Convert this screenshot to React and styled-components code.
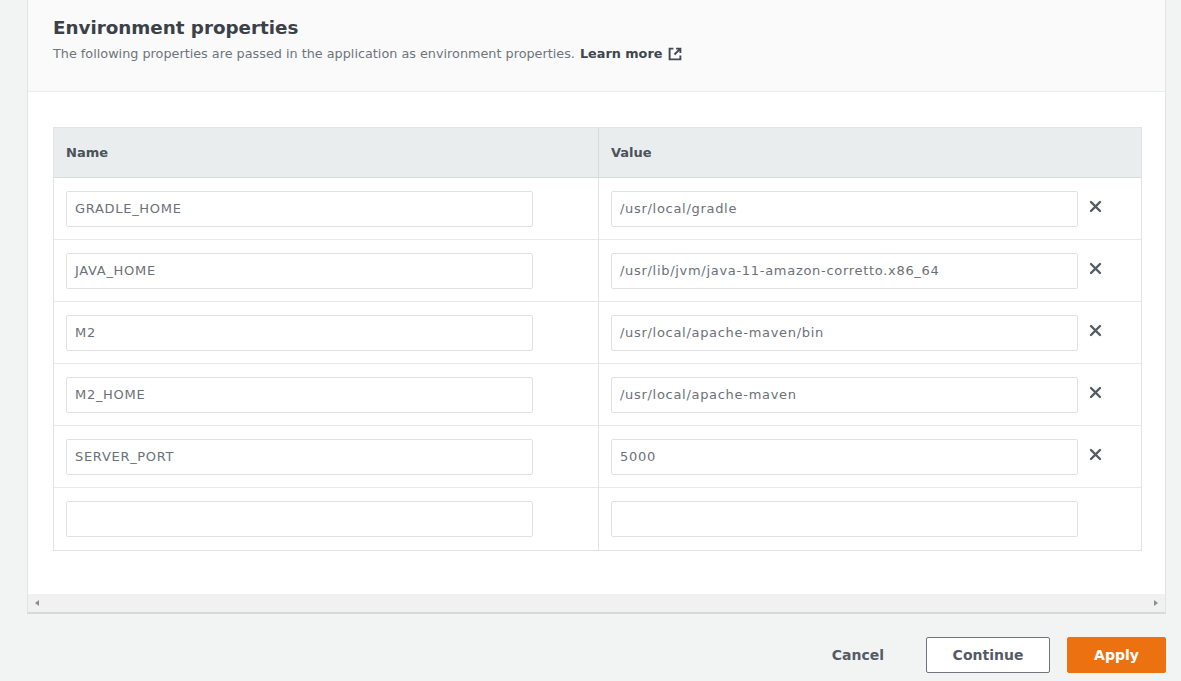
import React from "react";
import styled, { createGlobalStyle } from "styled-components";

const Global = createGlobalStyle`
  html, body { margin: 0; padding: 0; background: #f2f3f3; }
  body { font-family: "DejaVu Sans", "Liberation Sans", Arial, sans-serif; color: #16191f; }
  * { box-sizing: border-box; }
`;

const Page = styled.div`
  width: 1181px;
  height: 681px;
  overflow: hidden;
  padding-left: 27px;
  padding-right: 16px;
  display: flex;
  flex-direction: column;
`;

const Panel = styled.section`
  width: 1139px;
  background: #fff;
  border-left: 1px solid #e1e4e4;
  border-right: 1px solid #e1e4e4;
  border-bottom: 2px solid #d5dbdb;
  display: flex;
  flex-direction: column;
`;

const Header = styled.header`
  height: 92px;
  background: #fafafa;
  border-bottom: 1px solid #eaeded;
  padding: 16px 25px 0;
`;

const Title = styled.h2`
  margin: 0;
  font-size: 18.3px;
  font-weight: 700;
  color: #3b4148;
  line-height: 24px;
`;

const Description = styled.p`
  margin: 6px 0 0;
  font-size: 12.8px;
  color: #6e747b;
  line-height: 16px;
  display: flex;
  align-items: center;
  gap: 5px;
  white-space: nowrap;
`;

const LearnMore = styled.a`
  color: #3f464e;
  font-weight: 700;
  text-decoration: none;
  display: inline-flex;
  align-items: center;
  gap: 6px;
`;

const Body = styled.div`
  padding: 35px 23px 43px 25px;
`;

const Table = styled.div`
  border: 1px solid #e1e4e4;
  display: grid;
  grid-template-columns: 544px 1fr;
`;

const HeadCell = styled.div`
  height: 50px;
  background: #eaeded;
  border-bottom: 1px solid #d5dbdb;
  border-left: ${(p) => (p.$first ? "none" : "1px solid #d5dbdb")};
  padding: 0 12px;
  display: flex;
  align-items: center;
  font-size: 13px;
  font-weight: 700;
  color: #4b525a;
`;

const Cell = styled.div`
  height: 62px;
  border-bottom: ${(p) => (p.$last ? "none" : "1px solid #e6e9e9")};
  border-left: ${(p) => (p.$first ? "none" : "1px solid #e1e4e4")};
  padding: 0 12px;
  display: flex;
  align-items: center;
  gap: 10px;
`;

const Input = styled.div`
  width: 467px;
  height: 36px;
  border: 1px solid #dfe2e2;
  border-radius: 2px;
  background: #fff;
  padding: 0 8px;
  display: flex;
  align-items: center;
  font-size: 13px;
  letter-spacing: 0.7px;
  color: #6b7178;
  white-space: nowrap;
`;

const Remove = styled.button`
  border: 0;
  background: none;
  padding: 0;
  width: 14px;
  height: 14px;
  display: flex;
  align-items: center;
  justify-content: center;
  cursor: pointer;
  margin-top: -4px;
`;

const ScrollBar = styled.div`
  height: 18px;
  background: #f1f1f1;
  display: flex;
  align-items: center;
  justify-content: space-between;
  padding: 0 7px;
`;

const Arrow = styled.span`
  width: 0;
  height: 0;
  border-top: 3px solid transparent;
  border-bottom: 3px solid transparent;
  ${(p) =>
    p.$dir === "left"
      ? "border-right: 4px solid #8a8f94;"
      : "border-left: 4px solid #8a8f94;"}
`;

const Footer = styled.footer`
  display: flex;
  justify-content: flex-end;
  align-items: center;
  gap: 17px;
  padding-top: 23px;
  width: 1139px;
`;

const Button = styled.button`
  height: 36px;
  padding: 0 ${(p) => (p.$variant === "link" ? "24px" : "18px")};
  min-width: ${(p) => (p.$variant === "primary" ? "99px" : p.$variant === "normal" ? "124px" : "0")};
  font-family: "DejaVu Sans", "Liberation Sans", Arial, sans-serif;
  font-size: 14px;
  font-weight: 700;
  border-radius: 2px;
  cursor: pointer;
  ${(p) =>
    p.$variant === "primary"
      ? "background: #ec7211; color: #fff; border: 1px solid #ec7211;"
      : p.$variant === "normal"
      ? "background: #fff; color: #545b64; border: 1px solid #6d747b;"
      : "background: transparent; color: #545b64; border: 1px solid transparent;"}
`;

const XIcon = () => (
  <svg width="13" height="13" viewBox="0 0 13 13">
    <path d="M2 2 L11 11 M11 2 L2 11" stroke="#545b64" strokeWidth="2.4" strokeLinecap="round" />
  </svg>
);

const ExternalIcon = () => (
  <svg width="14" height="14" viewBox="0 0 13 13" fill="none" stroke="#444b53" strokeWidth="1.8">
    <path d="M5 1.5 H1.5 V11.5 H11.5 V8" />
    <path d="M7.5 1.5 H11.5 V5.5 M11.5 1.5 L6 7" />
  </svg>
);

const rows = [
  ["GRADLE_HOME", "/usr/local/gradle"],
  ["JAVA_HOME", "/usr/lib/jvm/java-11-amazon-corretto.x86_64"],
  ["M2", "/usr/local/apache-maven/bin"],
  ["M2_HOME", "/usr/local/apache-maven"],
  ["SERVER_PORT", "5000"],
  ["", ""],
];

export default function App() {
  return (
    <>
      <Global />
      <Page>
        <Panel>
          <Header>
            <Title>Environment properties</Title>
            <Description>
              The following properties are passed in the application as environment properties.
              <LearnMore href="#">
                Learn more <ExternalIcon />
              </LearnMore>
            </Description>
          </Header>
          <Body>
            <Table>
              <HeadCell $first>Name</HeadCell>
              <HeadCell>Value</HeadCell>
              {rows.map(([name, value], i) => {
                const last = i === rows.length - 1;
                return (
                  <React.Fragment key={i}>
                    <Cell $first $last={last}>
                      <Input>{name}</Input>
                    </Cell>
                    <Cell $last={last}>
                      <Input>{value}</Input>
                      {!last && (
                        <Remove aria-label="Remove">
                          <XIcon />
                        </Remove>
                      )}
                    </Cell>
                  </React.Fragment>
                );
              })}
            </Table>
          </Body>
          <ScrollBar>
            <Arrow $dir="left" />
            <Arrow $dir="right" />
          </ScrollBar>
        </Panel>
        <Footer>
          <Button $variant="link">Cancel</Button>
          <Button $variant="normal">Continue</Button>
          <Button $variant="primary">Apply</Button>
        </Footer>
      </Page>
    </>
  );
}
